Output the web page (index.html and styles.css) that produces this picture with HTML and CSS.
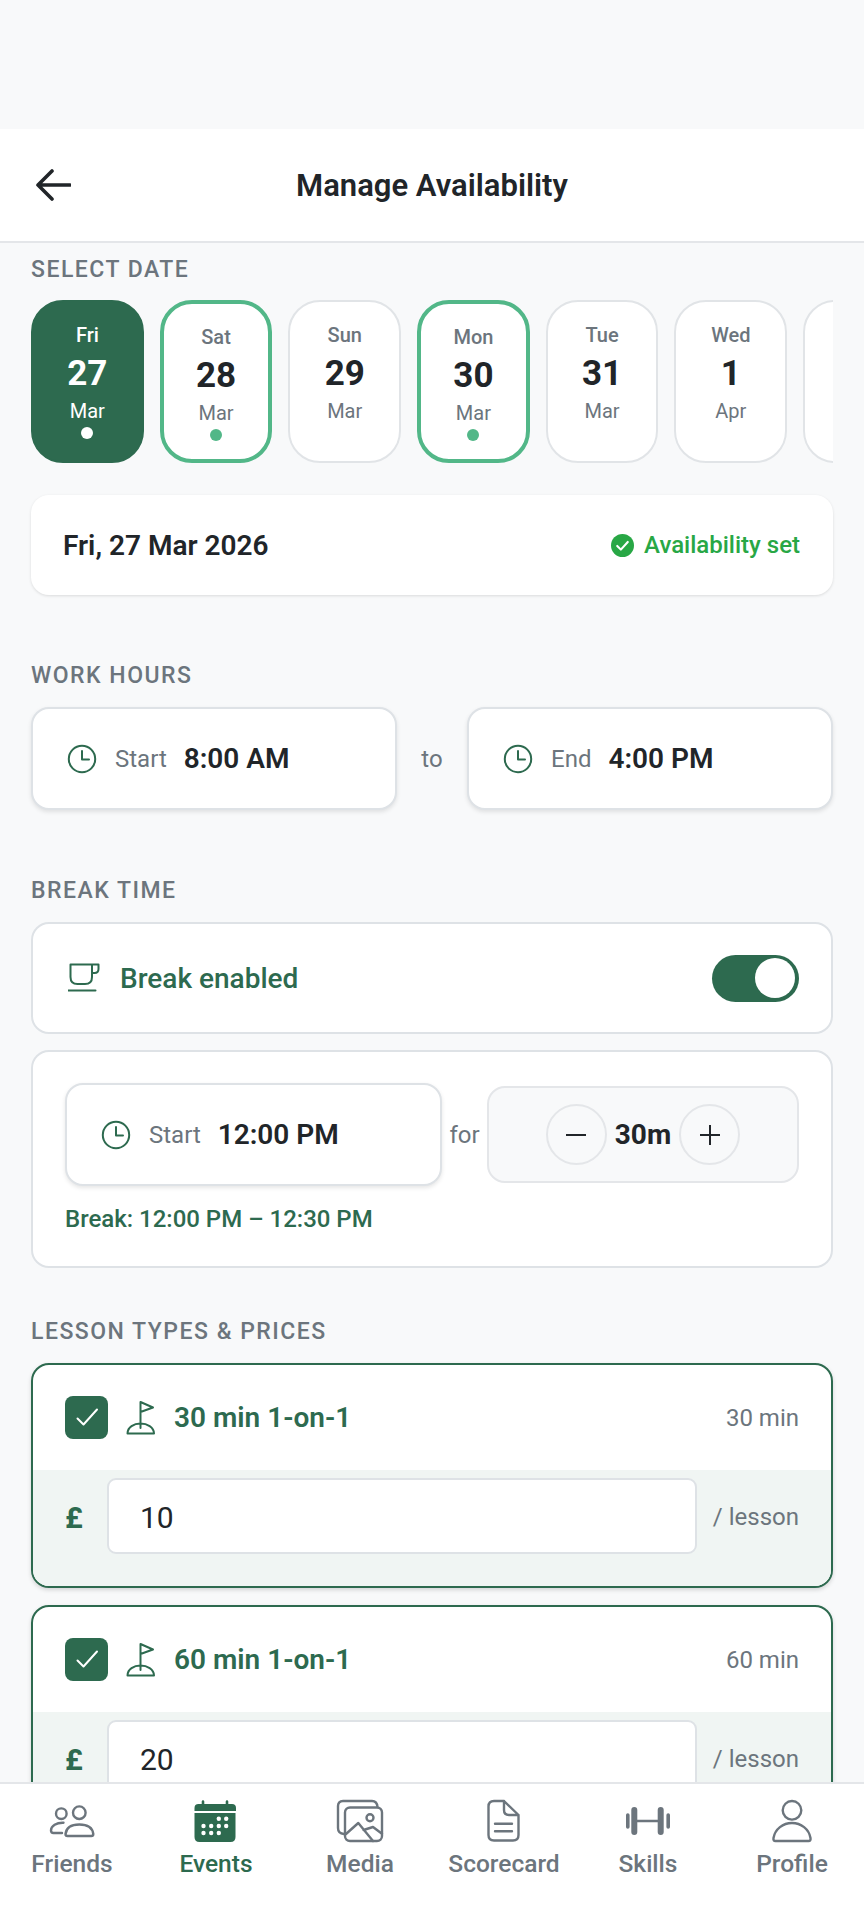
FILE: index.html
```html
<!DOCTYPE html>
<html lang="en">
<head>
    <meta charset="UTF-8">
    <title>Manage Availability</title>
    <link rel="stylesheet" href="styles.css">
</head>
<body>
    <div class="app">
        <div class="status-space"></div>

        <header class="topbar">
            <svg class="back-icon" viewBox="0 0 36 32"><path d="M35 16H3M17 2 3 16l14 14"/></svg>
            <h1>Manage Availability</h1>
        </header>

        <main class="content">
            <section class="section-first">
                <h2 class="section-label">SELECT DATE</h2>
                <div class="date-strip">
                    <div class="date-chip selected"><span class="chip-day">Fri</span><span class="chip-num">27</span><span class="chip-month">Mar</span><span class="chip-dot"></span></div>
                    <div class="date-chip has-slots"><span class="chip-day">Sat</span><span class="chip-num">28</span><span class="chip-month">Mar</span><span class="chip-dot"></span></div>
                    <div class="date-chip"><span class="chip-day">Sun</span><span class="chip-num">29</span><span class="chip-month">Mar</span></div>
                    <div class="date-chip has-slots"><span class="chip-day">Mon</span><span class="chip-num">30</span><span class="chip-month">Mar</span><span class="chip-dot"></span></div>
                    <div class="date-chip"><span class="chip-day">Tue</span><span class="chip-num">31</span><span class="chip-month">Mar</span></div>
                    <div class="date-chip"><span class="chip-day">Wed</span><span class="chip-num">1</span><span class="chip-month">Apr</span></div>
                    <div class="date-chip"></div>
                </div>
                <div class="date-summary">
                    <span class="summary-date">Fri, 27 Mar 2026</span>
                    <span class="summary-status">
                        <svg class="status-icon" viewBox="0 0 24 24"><circle cx="12" cy="12" r="12"/><path d="m6.5 12.5 3.8 3.8 7.2-8"/></svg>
                        Availability set
                    </span>
                </div>
            </section>

            <section class="section">
                <h2 class="section-label">WORK HOURS</h2>
                <div class="hours-row">
                    <div class="time-box">
                        <svg class="clock-icon" viewBox="0 0 30 30"><circle cx="15" cy="15" r="13.2"/><path d="M15 7v8.500h7"/></svg>
                        <span class="time-label">Start</span><span class="time-value">8:00 AM</span>
                    </div>
                    <span class="muted-word">to</span>
                    <div class="time-box">
                        <svg class="clock-icon" viewBox="0 0 30 30"><circle cx="15" cy="15" r="13.2"/><path d="M15 7v8.500h7"/></svg>
                        <span class="time-label">End</span><span class="time-value">4:00 PM</span>
                    </div>
                </div>
            </section>

            <section class="section">
                <h2 class="section-label">BREAK TIME</h2>
                <div class="card break-toggle">
                    <svg class="cup-icon" viewBox="0 0 32 30"><path d="M2.5 1.5H24V14q0 7-7 7H9.500q-7 0-7-7zM24 1.500h6.500V6q0 4-4 4H24M.5 27.500h27"/></svg>
                    <span class="break-title">Break enabled</span>
                    <span class="switch"><span class="switch-knob"></span></span>
                </div>
                <div class="card break-details">
                    <div class="break-row">
                        <div class="time-box break-start">
                            <svg class="clock-icon" viewBox="0 0 30 30"><circle cx="15" cy="15" r="13.2"/><path d="M15 7v8.500h7"/></svg>
                            <span class="time-label">Start</span><span class="time-value">12:00 PM</span>
                        </div>
                        <span class="muted-word">for</span>
                        <div class="stepper">
                            <span class="step-btn"><svg viewBox="0 0 24 24"><path d="M2 12h20"/></svg></span>
                            <span class="step-value">30m</span>
                            <span class="step-btn"><svg viewBox="0 0 24 24"><path d="M2 12h20M12 2v20"/></svg></span>
                        </div>
                    </div>
                    <p class="break-range">Break: 12:00 PM – 12:30 PM</p>
                </div>
            </section>

            <section class="section-lessons">
                <h2 class="section-label">LESSON TYPES &amp; PRICES</h2>

                <div class="lesson-card">
                    <div class="lesson-head">
                        <span class="check-box"><svg viewBox="0 0 24 24"><path d="m2.500 12.500 6 6 13.500-15"/></svg></span>
                        <svg class="flag-icon" viewBox="0 0 30 34"><path d="M14.500 27V1l12.500 5.500-12.500 4.500M1.500 32.500c0-6.500 6.500-10 13-10s13.500 3.500 13.500 10z"/></svg>
                        <span class="lesson-name">30 min 1-on-1</span>
                        <span class="lesson-length">30 min</span>
                    </div>
                    <div class="lesson-price">
                        <span class="currency">£</span>
                        <div class="price-input">10</div>
                        <span class="per-lesson">/ lesson</span>
                    </div>
                </div>

                <div class="lesson-card">
                    <div class="lesson-head">
                        <span class="check-box"><svg viewBox="0 0 24 24"><path d="m2.500 12.500 6 6 13.500-15"/></svg></span>
                        <svg class="flag-icon" viewBox="0 0 30 34"><path d="M14.500 27V1l12.500 5.500-12.500 4.500M1.500 32.500c0-6.500 6.500-10 13-10s13.500 3.500 13.500 10z"/></svg>
                        <span class="lesson-name">60 min 1-on-1</span>
                        <span class="lesson-length">60 min</span>
                    </div>
                    <div class="lesson-price">
                        <span class="currency">£</span>
                        <div class="price-input">20</div>
                        <span class="per-lesson">/ lesson</span>
                    </div>
                </div>
            </section>
        </main>

        <nav class="bottom-nav">
            <div class="nav-item">
                <svg viewBox="0 0 48 48"><circle cx="31.300" cy="15.700" r="6.300"/><circle cx="13.300" cy="16.700" r="5.300"/><path d="M19.500 39q-2 0-2-2 1-9.500 13.800-9.500T45.300 37q0 2-2 2zM15.500 25.800C8.500 25.500 3 29 3 33.500q0 2.500 2.500 2.500H14"/></svg>
                <span>Friends</span>
            </div>
            <div class="nav-item active">
                <svg viewBox="0 0 48 48">
                    <path class="solid" d="M2.500 14V11q0-4 4-4h3.200V4.500a1.300 1.300 0 0 1 2.600 0V7h21.400V4.500a1.300 1.300 0 0 1 2.600 0V7h3.700q4 0 4 4v3zM2.500 16h41v24q0 5-5 5h-31q-5 0-5-5z"/>
                    <g class="holes">
                        <circle cx="26.800" cy="21.700" r="2.200"/><circle cx="34.200" cy="21.700" r="2.200"/>
                        <circle cx="11.500" cy="29" r="2.200"/><circle cx="19.200" cy="29" r="2.200"/><circle cx="26.800" cy="29" r="2.200"/><circle cx="34.200" cy="29" r="2.200"/>
                        <circle cx="11.500" cy="36" r="2.200"/><circle cx="19.200" cy="36" r="2.200"/><circle cx="26.800" cy="36" r="2.200"/>
                    </g>
                </svg>
                <span>Events</span>
            </div>
            <div class="nav-item">
                <svg viewBox="0 0 48 48"><path d="M8 37q-6-.5-6-6V9q0-5 5-5h29q5 0 5.500 6"/><rect x="9" y="10.500" width="37" height="33.500" rx="5"/><circle cx="34" cy="20.700" r="3.500"/><path d="M10 37l12.300-11L37 44M27.500 33l9.500-3 9 6.700"/></svg>
                <span>Media</span>
            </div>
            <div class="nav-item">
                <svg viewBox="0 0 48 48"><path d="M14 4h10l14.500 14v20q0 5.500-5.500 5.500H14q-5.500 0-5.500-5.500V9.500Q8.500 4 14 4zM24 4v9q0 5 5 5h9.500M15 26.700h17M15 34.300h17"/></svg>
                <span>Scorecard</span>
            </div>
            <div class="nav-item">
                <svg viewBox="0 0 48 48"><path class="thick" d="M10.300 13v22M36.700 13v22"/><path class="thin" d="M3.800 18v12M44.200 18v12"/><path d="M13 24h21"/></svg>
                <span>Skills</span>
            </div>
            <div class="nav-item">
                <svg viewBox="0 0 48 48"><circle cx="24" cy="13.300" r="9.300"/><path d="M7.500 44q-2.500 0-2-3C7 32 15 26 24 26s17 6 18.500 15q.5 3-2 3z"/></svg>
                <span>Profile</span>
            </div>
        </nav>
    </div>
</body>
</html>
```

FILE: styles.css
```css
/* Reset and Base */
* {
    margin: 0;
    padding: 0;
    box-sizing: border-box;
}

body {
    font-family: Roboto, "Liberation Sans", sans-serif;
    background-color: #f8f9fa;
    color: #212529;
}

svg {
    display: block;
    fill: none;
    stroke-linecap: round;
    stroke-linejoin: round;
}

.app {
    display: flex;
    flex-direction: column;
    height: 100vh;
    overflow: hidden;
}

.status-space {
    flex: 0 0 129px;
}

/* Top bar */
.topbar {
    flex: 0 0 114px;
    display: flex;
    align-items: center;
    justify-content: center;
    position: relative;
    background-color: #ffffff;
    border-bottom: 2px solid #e4e6e9;
}

.topbar h1 {
    font-size: 31px;
    font-weight: 600;
    color: #212529;
}

.back-icon {
    position: absolute;
    left: 35px;
    top: 40px;
    width: 36px;
    height: 32px;
    stroke: #212529;
    stroke-width: 3.600;
}

/* Main content */
.content {
    flex: 1;
    min-height: 0;
    overflow: hidden;
    padding: 14px 31px 0;
}

.section-label {
    font-size: 23px;
    line-height: 26px;
    font-weight: 500;
    letter-spacing: 1.500px;
    color: #6c757d;
    margin-bottom: 18px;
}

.section-first .section-label {
    margin-bottom: 17px;
}

.section {
    margin-top: 68px;
}

.section-lessons {
    margin-top: 51px;
}

/* Date strip */
.date-strip {
    display: flex;
    gap: 16px;
    overflow: hidden;
}

.date-chip {
    flex: 0 0 112.700px;
    height: 163px;
    display: flex;
    flex-direction: column;
    align-items: center;
    padding-top: 21px;
    background-color: #ffffff;
    border: 2px solid #e1e4e7;
    border-radius: 32px;
}

.chip-day {
    font-size: 20px;
    line-height: 24px;
    font-weight: 500;
    color: #6c757d;
}

.chip-num {
    font-size: 35px;
    line-height: 40px;
    font-weight: 700;
    margin-top: 7px;
}

.chip-month {
    font-size: 20px;
    line-height: 24px;
    color: #6c757d;
    margin-top: 5px;
}

.chip-dot {
    width: 12px;
    height: 12px;
    margin-top: 4px;
    border-radius: 50%;
    background-color: #52b788;
}

.date-chip.selected {
    background-color: #2d6a4f;
    border-color: #2d6a4f;
}

.date-chip.selected span {
    color: #ffffff;
}

.date-chip.selected .chip-dot {
    background-color: #ffffff;
}

.date-chip.has-slots {
    border: 4px solid #52b788;
}

/* Selected date summary */
.date-summary {
    display: flex;
    align-items: center;
    justify-content: space-between;
    height: 100px;
    margin-top: 32px;
    padding: 0 33px 0 32px;
    background-color: #ffffff;
    border-radius: 18px;
    box-shadow: 0 1px 3px rgba(0, 0, 0, 0.12);
}

.summary-date {
    font-size: 28px;
    font-weight: 600;
}

.summary-status {
    display: flex;
    align-items: center;
    gap: 10px;
    font-size: 24px;
    font-weight: 500;
    color: #28a745;
}

.status-icon {
    width: 23px;
    height: 23px;
}

.status-icon circle {
    fill: #28a745;
}

.status-icon path {
    stroke: #ffffff;
    stroke-width: 2.200;
}

/* Time boxes */
.hours-row {
    display: flex;
    align-items: center;
}

.hours-row .time-box {
    flex: 1;
}

.hours-row .muted-word {
    flex: 0 0 70px;
    text-align: center;
}

.time-box {
    display: flex;
    align-items: center;
    height: 103px;
    padding-left: 34px;
    background-color: #ffffff;
    border: 2px solid #dee2e6;
    border-radius: 18px;
    box-shadow: 0 2px 4px rgba(0, 0, 0, 0.1);
}

.clock-icon {
    flex: none;
    width: 30px;
    height: 30px;
    stroke: #2d6a4f;
    stroke-width: 2;
}

.time-label {
    margin-left: 18px;
    font-size: 24px;
    color: #6c757d;
}

.time-value {
    margin-left: 17px;
    font-size: 28px;
    font-weight: 600;
}

.muted-word {
    font-size: 24px;
    color: #6c757d;
}

/* Break time */
.card {
    background-color: #ffffff;
    border: 2px solid #dee2e6;
    border-radius: 18px;
}

.break-toggle {
    display: flex;
    align-items: center;
    height: 112px;
    padding: 0 32px 0 35px;
}

.cup-icon {
    width: 32px;
    height: 30px;
    stroke: #2d6a4f;
    stroke-width: 2;
}

.break-title {
    flex: 1;
    margin-left: 20px;
    font-size: 28px;
    font-weight: 500;
    color: #2d6a4f;
}

.switch {
    display: flex;
    justify-content: flex-end;
    align-items: center;
    width: 87px;
    height: 47px;
    padding-right: 4px;
    border-radius: 24px;
    background-color: #2d6a4f;
}

.switch-knob {
    width: 40px;
    height: 40px;
    border-radius: 50%;
    background-color: #ffffff;
}

.break-details {
    height: 218px;
    margin-top: 16px;
    padding: 31px 32px 0;
}

.break-row {
    display: flex;
    align-items: center;
}

.break-start {
    flex: 0 0 377px;
}

.break-row .muted-word {
    flex: 0 0 45px;
    text-align: center;
}

.stepper {
    flex: 1;
    height: 97px;
    display: flex;
    align-items: center;
    justify-content: center;
    gap: 8px;
    background-color: #f8f9fa;
    border: 2px solid #e4e6e9;
    border-radius: 18px;
}

.step-btn {
    width: 61px;
    height: 61px;
    display: flex;
    align-items: center;
    justify-content: center;
    border: 2px solid #e4e6e9;
    border-radius: 50%;
}

.step-btn svg {
    width: 24px;
    height: 24px;
    stroke: #212529;
    stroke-width: 2;
    stroke-linecap: butt;
}

.step-value {
    font-size: 28px;
    font-weight: 700;
}

.break-range {
    margin-top: 19px;
    font-size: 24px;
    font-weight: 500;
    color: #2d6a4f;
}

/* Lesson cards */
.lesson-card {
    height: 225px;
    margin-bottom: 17px;
    background-color: #ffffff;
    border: 2px solid #2d6a4f;
    border-radius: 18px;
    box-shadow: 0 2px 4px rgba(0, 0, 0, 0.15);
    overflow: hidden;
}

.lesson-head {
    display: flex;
    align-items: center;
    height: 105px;
    padding: 0 32px;
}

.check-box {
    width: 43px;
    height: 43px;
    display: flex;
    align-items: center;
    justify-content: center;
    background-color: #2d6a4f;
    border-radius: 8px;
}

.check-box svg {
    width: 24px;
    height: 24px;
    stroke: #ffffff;
    stroke-width: 2;
}

.flag-icon {
    width: 30px;
    height: 34px;
    margin-left: 18px;
    stroke: #2d6a4f;
    stroke-width: 2;
}

.lesson-name {
    flex: 1;
    margin-left: 18px;
    font-size: 28px;
    font-weight: 600;
    color: #2d6a4f;
}

.lesson-length {
    font-size: 24px;
    color: #6c757d;
}

.lesson-price {
    display: flex;
    align-items: flex-start;
    height: 118px;
    padding: 8px 32px 0;
    background-color: #f0f5f3;
}

.currency {
    width: 42px;
    line-height: 80px;
    font-size: 30px;
    font-weight: 700;
    color: #2d6a4f;
}

.price-input {
    flex: 1;
    height: 76px;
    padding-left: 31px;
    line-height: 76px;
    font-size: 30px;
    background-color: #ffffff;
    border: 2px solid #dee2e6;
    border-radius: 9px;
}

.per-lesson {
    width: 102px;
    text-align: right;
    line-height: 78px;
    font-size: 24px;
    color: #6c757d;
}

/* Bottom navigation */
.bottom-nav {
    flex: 0 0 141px;
    display: flex;
    padding-top: 13px;
    background-color: #ffffff;
    border-top: 2px solid #e4e6e9;
}

.nav-item {
    flex: 1;
    display: flex;
    flex-direction: column;
    align-items: center;
    color: #6c757d;
}

.nav-item svg {
    width: 48px;
    height: 48px;
    stroke: #6c757d;
    stroke-width: 2.400;
}

.nav-item span {
    margin-top: 5px;
    font-size: 24.500px;
    line-height: 28px;
    font-weight: 500;
}

.nav-item.active {
    color: #2d6a4f;
}

.nav-item.active svg {
    stroke: none;
}

.nav-item .solid {
    fill: #2d6a4f;
}

.nav-item .holes {
    fill: #ffffff;
}

.nav-item .thick {
    stroke-width: 6;
}

.nav-item .thin {
    stroke-width: 3.600;
}
```
